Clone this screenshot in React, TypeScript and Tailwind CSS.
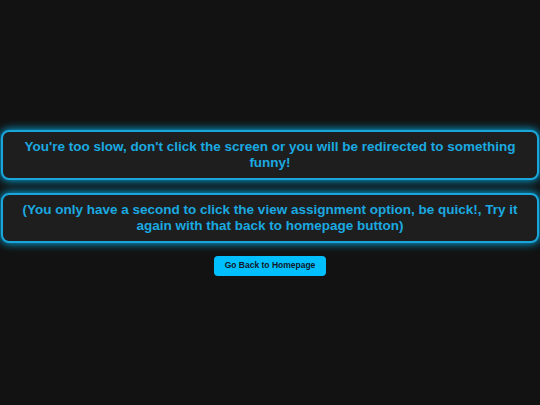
export default function App() {
  return (
    <div className="min-h-screen bg-[#121212] flex flex-col items-center justify-center font-['Liberation_Sans',Arial,sans-serif]">
      <div className="w-full flex flex-col gap-[13px]">
        <div className="mx-px rounded-lg border-2 border-[#1ba6db] bg-[#1e1e1e] px-4 py-[7px] shadow-[0_0_10px_#00bfff] text-center">
          <p className="text-[13.5px] leading-[16px] font-bold text-[#1aa9e0]">
            You're too slow, don't click the screen or you will be redirected to something funny!
          </p>
        </div>
        <div className="mx-px rounded-lg border-2 border-[#1ba6db] bg-[#1e1e1e] px-4 py-[7px] shadow-[0_0_10px_#00bfff] text-center">
          <p className="text-[13.5px] leading-[16px] font-bold text-[#1aa9e0]">
            (You only have a second to click the view assignment option, be quick!, Try it again with that back to homepage button)
          </p>
        </div>
      </div>
      <button className="mt-[13px] h-5 px-[11px] rounded bg-[#00bfff] text-[#111827] text-[8.5px] font-bold">
        Go Back to Homepage
      </button>
    </div>
  );
}
